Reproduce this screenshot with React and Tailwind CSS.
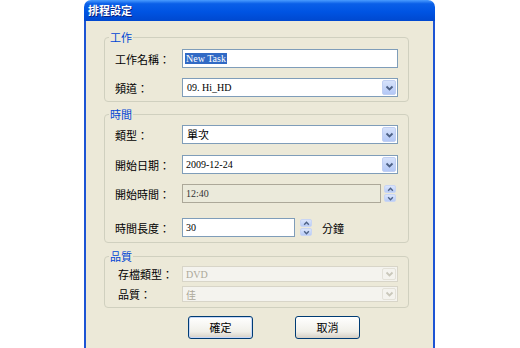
import React from 'react';

function Chevron({ up = false, color = '#4d6185', w = 9, h = 6 }) {
  return (
    <svg width={w} height={h} viewBox="0 0 9 6" className="block">
      <path
        d={up ? 'M1.5 4.5 L4.5 1.5 L7.5 4.5' : 'M1.5 1.5 L4.5 4.5 L7.5 1.5'}
        fill="none"
        stroke={color}
        strokeWidth="1.8"
      />
    </svg>
  );
}

function DropBtn({ disabled }) {
  return (
    <div
      className={`w-[14px] self-stretch m-[1px] rounded-[2px] flex items-center justify-center border ${
        disabled
          ? 'bg-[#f4f3ee] border-[#e3e1d8]'
          : 'bg-[linear-gradient(180deg,#d6e2fb,#b4c8f6)] border-[#c0cff2]'
      }`}
    >
      <Chevron color={disabled ? '#c9c7ba' : '#4d6185'} />
    </div>
  );
}

function Spinner() {
  return (
    <div className="flex flex-col gap-[1px] w-[12px]">
      <div className="h-[8px] rounded-[2px] bg-[linear-gradient(180deg,#dbe5fc,#b9ccf6)] border border-[#c8d5f4] flex items-center justify-center">
        <Chevron up w={7} h={5} />
      </div>
      <div className="h-[8px] rounded-[2px] bg-[linear-gradient(180deg,#dbe5fc,#b9ccf6)] border border-[#c8d5f4] flex items-center justify-center">
        <Chevron w={7} h={5} />
      </div>
    </div>
  );
}

function Group({ title, className = '', children }) {
  return (
    <fieldset className={`w-[305px] border border-[#d0d0bf] rounded-[4px] ${className}`}>
      <legend className="ml-[4px] px-[1px] text-[11px] leading-[12px] text-[#0046d5]">{title}</legend>
      {children}
    </fieldset>
  );
}

function Row({ label, className = '', labelClass = 'pl-[10px]', children }) {
  return (
    <div className={`flex items-center ${className}`}>
      <div className={`w-[77px] shrink-0 text-[11px] leading-[12px] text-black ${labelClass}`}>{label}</div>
      {children}
    </div>
  );
}

// latin text inside the fields is a small serif face
const latin = "font-['Liberation_Serif',serif] text-[10px]";

export default function App() {
  return (
    <div className="w-[520px] h-[348px] bg-white overflow-hidden font-['Noto_Sans_CJK_TC','Noto_Sans_CJK_SC',sans-serif]">
      <div className="ml-[84px] w-[351px] h-[348px] flex flex-col">
        {/* title bar */}
        <div className="h-[21px] shrink-0 rounded-t-[7px] bg-[linear-gradient(180deg,#4a9cff_0%,#0a5fe8_18%,#0054e3_55%,#0048cf_100%)] flex items-center pl-[4px]">
          <span className="text-white font-bold text-[11px] leading-none [text-shadow:1px_1px_0_#0a1e7a]">排程設定</span>
        </div>

        <div className="flex-1 bg-[#ece9d8] border-l-2 border-r-2 border-[#1c54d4] pl-[18px] pt-[10px]">
          {/* 工作 */}
          <Group title="工作" className="pb-[4px]">
            <Row label="工作名稱：" className="mt-[6px]">
              <div className="w-[216px] h-[19px] bg-white border border-[#7f9db9] flex items-center pl-[2px]">
                <span className={`${latin} leading-[11px] bg-[#316ac5] text-white px-[1px]`}>New Task</span>
              </div>
            </Row>
            <Row label="頻道：" className="mt-[10px]">
              <div className="w-[216px] h-[19px] bg-white border border-[#7f9db9] flex items-center">
                <span className={`${latin} flex-1 pl-[4px] text-black`}>09. Hi_HD</span>
                <DropBtn />
              </div>
            </Row>
          </Group>

          {/* 時間 */}
          <Group title="時間" className="mt-[6px] pb-[5px]">
            <Row label="類型：" className="mt-[5px]">
              <div className="w-[216px] h-[19px] bg-white border border-[#7f9db9] flex items-center">
                <span className="flex-1 pl-[4px] text-[11px] text-black">單次</span>
                <DropBtn />
              </div>
            </Row>
            <Row label="開始日期：" className="mt-[11px]">
              <div className="w-[216px] h-[19px] bg-white border border-[#7f9db9] flex items-center">
                <span className={`${latin} flex-1 pl-[3px] text-black`}>2009-12-24</span>
                <DropBtn />
              </div>
            </Row>
            <Row label="開始時間：" className="mt-[10px]">
              <div className="w-[199px] h-[19px] bg-[#ebeadb] border border-[#aca899] flex items-center pl-[3px]">
                <span className={`${latin} text-[#333]`}>12:40</span>
              </div>
              <div className="ml-[3px]">
                <Spinner />
              </div>
            </Row>
            <Row label="時間長度：" className="mt-[15px]">
              <div className="w-[113px] h-[19px] bg-white border border-[#7f9db9] flex items-center pl-[3px]">
                <span className={`${latin} text-black`}>30</span>
              </div>
              <div className="ml-[5px]">
                <Spinner />
              </div>
              <span className="ml-[10px] text-[11px] leading-[12px] text-black">分鐘</span>
            </Row>
          </Group>

          {/* 品質 */}
          <Group title="品質" className="mt-[7px] pb-[5px]">
            <Row label="存檔類型：" labelClass="pl-[13px]" className="mt-[4px]">
              <div className="w-[216px] h-[16px] bg-[#f4f3ee] border border-[#d8d5c8] flex items-center">
                <span className={`${latin} flex-1 pl-[3px] text-[#aca899]`}>DVD</span>
                <DropBtn disabled />
              </div>
            </Row>
            <Row label="品質：" labelClass="pl-[13px]" className="mt-[4px]">
              <div className="w-[216px] h-[16px] bg-[#f4f3ee] border border-[#d8d5c8] flex items-center">
                <span className="flex-1 pl-[3px] text-[10px] text-[#aca899]">佳</span>
                <DropBtn disabled />
              </div>
            </Row>
          </Group>

          {/* buttons */}
          <div className="flex gap-[42px] pl-[84px] mt-[8px]">
            <button className="w-[65px] h-[23px] rounded-[3px] border border-[#003c74] bg-[linear-gradient(180deg,#ffffff,#f0efe8_70%,#d6d0c5)] text-[11px] text-black shadow-[inset_0_0_0_1px_#c6d7f7]">
              確定
            </button>
            <button className="w-[65px] h-[23px] rounded-[3px] border border-[#003c74] bg-[linear-gradient(180deg,#ffffff,#f0efe8_70%,#d6d0c5)] text-[11px] text-black">
              取消
            </button>
          </div>
        </div>
      </div>
    </div>
  );
}
